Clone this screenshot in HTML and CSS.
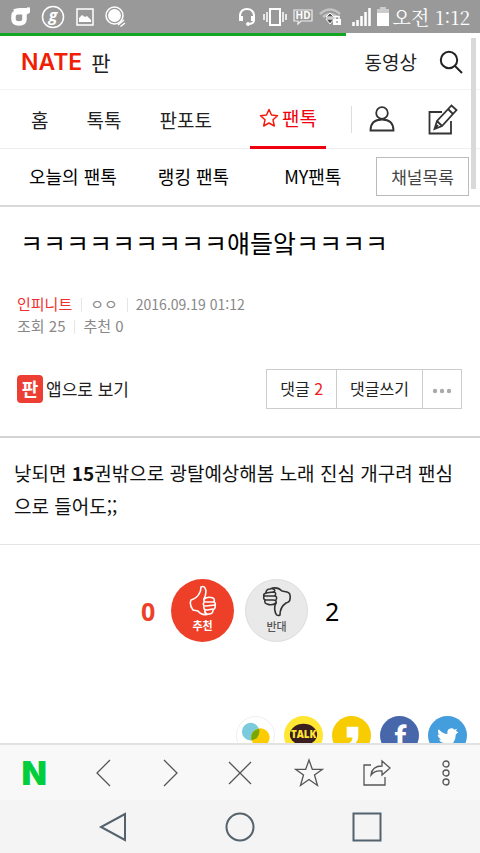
FILE: index.html
```html
<!DOCTYPE html>
<html lang="ko">
<head>
<meta charset="utf-8">
<meta name="viewport" content="width=device-width, initial-scale=1">
<title>네이트 판</title>
<link rel="stylesheet" href="styles.css">
</head>
<body>
<div class="status">
  <div class="status-icons">
    <svg width="20" height="20" viewBox="0 0 20 20"><path d="M19.500 0.500Q19 5.200 15 5.200H8Q3.500 5.200 3.500 9V12Q3.500 16.500 9 16.500Q14.500 16.500 14.500 12V4" fill="none" stroke="#fff" stroke-width="4.500"/><path d="M3 2.500Q6 1 10 1H19V6H6Z" fill="#fff"/></svg>
    <svg width="24" height="24" viewBox="0 0 24 24"><circle cx="12" cy="12" r="10.500" fill="none" stroke="#fff" stroke-width="1.500"/><text x="12" y="16" class="g-mark">g</text></svg>
    <svg width="18" height="18" viewBox="0 0 18 18"><rect x="1" y="1" width="16" height="16" fill="none" stroke="#fff" stroke-width="1.500"/><path d="M3 14V10L6 7L9 9L11 8L15 12V14Z" fill="#fff"/></svg>
    <svg width="21" height="22" viewBox="0 0 21 22"><circle cx="9.500" cy="9.500" r="8.500" fill="none" stroke="#fff" stroke-width="1.500"/><circle cx="9.500" cy="9.500" r="6.500" fill="#fff"/><path d="M13 19L19 14M15.500 20.500L20 17" stroke="#fff" stroke-width="1.500"/></svg>
  </div>
  <div class="status-info">
    <svg width="20" height="20" viewBox="0 0 20 20" fill="none" stroke="#fff"><path d="M3 13V8Q4 2 10 2Q16 2 17 8V13Q17 17 11 17" stroke-width="2"/><path d="M4 9V14M16 9V14" stroke-width="4"/><circle cx="11" cy="17" r="1.500" fill="#fff"/></svg>
    <svg width="24" height="20" viewBox="0 0 24 20" fill="none" stroke="#fff"><rect x="7" y="2" width="10" height="16" stroke-width="2"/><path d="M4 5V15M20 5V15" stroke-width="1.500"/><path d="M1 7V13M23 7V13" stroke-width="1.500"/></svg>
    <svg width="20" height="18" viewBox="0 0 20 18"><path d="M1 2H19V13H8L5 16V13H1Z" fill="none" stroke="#eee" stroke-width="1.200"/><text x="10" y="11" class="hd-mark">HD</text></svg>
    <svg width="22" height="18" viewBox="0 0 22 18"><path d="M1 6Q11 -3 21 6M4 9Q11 3 18 9" fill="none" stroke="#c4c4c4" stroke-width="2.500"/><path d="M7 9L11 5L15 9ZM7 11H15L11 16Z" fill="#555" stroke="#fff"/><rect x="14" y="11" width="8" height="6" fill="#fff"/><path d="M16 11V8.500H20V11" fill="none" stroke="#fff" stroke-width="1.500"/><path d="M18 13V15" stroke="#777"/></svg>
    <svg class="signal" width="20" height="20" viewBox="0 0 20 20"><path d="M2.500 19V15M6.500 19V13M10.500 19V9M14.500 19V5M18.500 19V1" stroke="#fff" stroke-width="2.500"/></svg>
    <svg width="12" height="20" viewBox="0 0 12 20"><path d="M3 0H9V2H12V19H0V2H3Z" fill="#ccc"/><path d="M0 6H12V19H0Z" fill="#fff"/></svg>
    <span class="clock">오전 1:12</span>
  </div>
</div>
<div class="progress"><div class="progress-bar"></div></div>

<main class="page">
  <div class="scrollbar"></div>
  <header class="top">
    <a class="logo" href="#"><b>NATE</b><span>판</span></a>
    <a class="video" href="#">동영상</a>
    <button class="icon-btn" aria-label="검색"><svg width="24" height="24" viewBox="0 0 24 24" fill="none" stroke="#222" stroke-width="2"><circle cx="10" cy="10" r="8.200"/><path d="M16 16L23 23"/></svg></button>
  </header>
  <nav class="tabs">
    <a class="tab" href="#">홈</a>
    <a class="tab" href="#">톡톡</a>
    <a class="tab" href="#">판포토</a>
    <a class="tab active" href="#"><svg width="20" height="20" viewBox="0 0 20 20"><path d="M10 1.500L12.500 7L18.500 7.700L14 11.800L15.300 18L10 15L4.700 18L6 11.800L1.500 7.700L7.500 7Z" fill="none" stroke="#f21c0d" stroke-width="1.500" stroke-linejoin="round"/></svg>팬톡</a>
    <span class="tools">
      <button class="icon-btn" aria-label="내 정보"><svg width="26" height="26" viewBox="0 0 26 26" fill="none" stroke="#333" stroke-width="1.800"><circle cx="13" cy="7" r="5.800"/><path d="M1.500 24.500Q1.500 13.500 13 13.500Q24.500 13.500 24.500 24.500Z"/></svg></button>
      <button class="icon-btn" aria-label="글쓰기"><svg width="30" height="31" viewBox="0 0 30 31" fill="none" stroke="#333" stroke-width="1.800"><path d="M14 8H1.500V29.500H23V17"/><path d="M6.500 25L9 17L23.500 1.500L28.500 6L14 22ZM20 5L25 10M9 17L14 22M6.500 25L10 21"/></svg></button>
    </span>
  </nav>
  <nav class="subtabs">
    <a href="#">오늘의 팬톡</a>
    <a href="#">랭킹 팬톡</a>
    <a href="#">MY팬톡</a>
    <button class="channels">채널목록</button>
  </nav>

  <article>
    <section class="head">
      <h1>ㅋㅋㅋㅋㅋㅋㅋㅋㅋ얘들앜ㅋㅋㅋㅋ</h1>
      <div class="meta">
        <p><a class="channel" href="#">인피니트</a><span class="writer">ㅇㅇ</span><span class="date">2016.09.19 01:12</span></p>
        <p><span>조회 25</span><span>추천 0</span></p>
      </div>
      <div class="actions">
        <a class="app" href="#"><span class="app-icon">판</span>앱으로 보기</a>
        <div class="group">
          <button>댓글 <em>2</em></button><button>댓글쓰기</button><button class="more" aria-label="더보기"><svg width="20" height="6" viewBox="0 0 20 6" fill="#aaa"><circle cx="3" cy="3" r="2.200"/><circle cx="10" cy="3" r="2.200"/><circle cx="17" cy="3" r="2.200"/></svg></button>
        </div>
      </div>
    </section>
    <p class="content">낮되면 <b>15</b>권밖으로 광탈예상해봄 노래 진심 개구려 팬심으로 들어도;;</p>
    <section class="votes">
      <span class="count up">0</span>
      <button class="vote like"><svg width="28" height="32" viewBox="0 0 28 32" fill="none" stroke="#fff" stroke-width="1.600" stroke-linejoin="round" stroke-linecap="round"><path d="M15 14Q19 11 24 13Q26 14 25 17Q27 18 26 21Q27 23 24 25Q24 29 20 29Q13 31 9 26L4 25Q0 20 2 15Q8 13 10 9Q12 6 12 2Q16 0 17 6Q17 10 15 14"/><path d="M15 14Q14 17 18 17L25 17M15 17Q13 21 17 21L26 20M15 21Q14 25 18 25L24 24M16 25Q15 28 18 29"/></svg>추천</button>
      <button class="vote dislike"><svg width="30" height="32" viewBox="0 0 30 32" fill="none" stroke="#333" stroke-width="1.600" stroke-linejoin="round" stroke-linecap="round"><path d="M14 17Q10 20 5 18Q2 17 3 14Q1 13 2 10Q1 8 4 7Q4 3 8 3Q15 0 20 5L25 6Q29 7 28 13Q28 16 24 17Q18 21 18 29Q14 31 13 25Q12 21 14 17"/><path d="M14 17Q15 14 11 14L3 14M14 14Q16 10 12 10L2 10M13 10Q15 6 11 6L4 7M12 6Q14 4 11 3"/></svg>반대</button>
      <span class="count down">2</span>
    </section>
    <section class="share">
      <a href="#" aria-label="공감"><svg viewBox="0 0 40 40"><circle cx="20" cy="20" r="19.500" fill="#fff" stroke="#eee"/><circle cx="15" cy="16" r="9" fill="#7bcbdc"/><circle cx="25" cy="22" r="9.500" fill="#fccb00"/><path d="M23.800 13Q25 19 21 23L16 25Q14 15 23.800 13Z" fill="#7aa600"/></svg></a>
      <a href="#" aria-label="카카오톡"><svg viewBox="0 0 40 40"><circle cx="20" cy="20" r="20" fill="#ffe633"/><ellipse cx="20" cy="19" rx="14" ry="11" fill="#381e1f"/><path d="M13 27L12 34L20 29Z" fill="#381e1f"/><text x="20" y="23" class="talk-mark">TALK</text></svg></a>
      <a href="#" aria-label="카카오스토리"><svg viewBox="0 0 40 40"><circle cx="20" cy="20" r="20" fill="#f7cc00"/><path d="M15 11H27V21Q27 28 19 31L17 28Q21 26 21 22H15Z" fill="#fff"/></svg></a>
      <a href="#" aria-label="페이스북"><svg viewBox="0 0 40 40"><circle cx="20" cy="20" r="20" fill="#4867aa"/><text x="21" y="35" class="fb-mark">f</text></svg></a>
      <a href="#" aria-label="트위터"><svg viewBox="0 0 40 40"><circle cx="20" cy="20" r="20" fill="#449ddc"/><path d="M31 15.500Q30 17 28.500 18Q28.500 26 22 30Q15 33 9 28.500Q13 29 16 26.500Q12 26 11.500 23H13.500Q10 21 10 18L12 18.500Q9 16 11 12.500Q15 17 20 17.500Q19 12 24 11.500Q26 11.500 27 13L30 12L28.500 14.500Z" transform="translate(0 1)" fill="#fff"/></svg></a>
    </section>
  </article>
</main>

<nav class="browser">
  <a href="#" class="naver">N</a>
  <button aria-label="뒤로"><svg width="16" height="28" viewBox="0 0 16 28"><path d="M15 1L2 14L15 27"/></svg></button>
  <button aria-label="앞으로"><svg width="16" height="28" viewBox="0 0 16 28"><path d="M1 1L14 14L1 27"/></svg></button>
  <button aria-label="닫기"><svg width="24" height="24" viewBox="0 0 24 24"><path d="M1 1L23 23M23 1L1 23"/></svg></button>
  <button aria-label="즐겨찾기"><svg width="30" height="30" viewBox="0 0 30 30"><path d="M15 2L18.300 11.300H28.500L20.500 17L23.500 27.500L15 21.500L6.500 27.500L9.500 17L1.500 11.300H11.700Z"/></svg></button>
  <button aria-label="공유"><svg width="30" height="28" viewBox="0 0 30 28"><path d="M9 6H2V26H23V18M9 16Q10 7 20 7V2L28 9L20 16V12Q13 11 9 16Z"/></svg></button>
  <button aria-label="메뉴"><svg width="10" height="28" viewBox="0 0 10 28"><circle cx="5" cy="5" r="3"/><circle cx="5" cy="14" r="3"/><circle cx="5" cy="23" r="3"/></svg></button>
</nav>
<nav class="system">
  <button aria-label="이전"><svg width="30" height="30" viewBox="0 0 30 30"><path d="M27 2V28L3 15Z"/></svg></button>
  <button aria-label="홈"><svg width="30" height="30" viewBox="0 0 30 30"><circle cx="15" cy="15" r="13.500"/></svg></button>
  <button aria-label="최근 앱"><svg width="30" height="30" viewBox="0 0 30 30"><rect x="1.500" y="1.500" width="27" height="27"/></svg></button>
</nav>
</body>
</html>
```
FILE: styles.css
```css
* { box-sizing: border-box; }
body {
  margin: 0;
  height: 100vh;
  display: flex;
  flex-direction: column;
  overflow: hidden;
  background: #fff;
  color: #000;
  font-family: "Noto Sans CJK KR", sans-serif;
}
a { color: inherit; text-decoration: none; }
button {
  margin: 0;
  padding: 0;
  border: 0;
  background: none;
  color: inherit;
  font: inherit;
}
h1, p { margin: 0; font-weight: 400; }
svg { display: block; flex: none; }

.status {
  flex: none;
  height: 33px;
  padding: 0 10px;
  display: flex;
  align-items: center;
  justify-content: space-between;
  background: #999;
  color: #fff;
}
.status-icons { display: flex; align-items: center; gap: 11px; }
.status-info { display: flex; align-items: center; gap: 6px; }
.signal { margin-left: 4px; }
.clock {
  margin-left: -2px;
  font-family: "Noto Serif CJK KR", "Liberation Serif", "Noto Sans CJK KR", serif;
  font-size: 19px;
}
.g-mark { font: italic bold 16px "Open Sans", sans-serif; text-anchor: middle; fill: #fff; }
.hd-mark { font: bold 10px "Noto Sans", sans-serif; text-anchor: middle; fill: #fff; }
.progress { flex: none; height: 3px; }
.progress-bar { width: 72%; height: 100%; background: #12a622; }

.page { position: relative; flex: 1; min-height: 0; overflow: hidden; }
.scrollbar {
  position: absolute;
  top: 2px;
  right: 4px;
  width: 5px;
  height: 151px;
  background: #d9d9d9;
}
.icon-btn { display: flex; }

.top {
  height: 54px;
  padding: 0 17px 2px 21px;
  display: flex;
  align-items: center;
  border-bottom: 1px solid #f3f3f3;
}
.logo { display: flex; align-items: center; gap: 9px; margin-right: auto; font-size: 21px; line-height: 32px; color: #222; }
.logo b { font-family: Inter, sans-serif; font-size: 23px; font-weight: 600; color: #f01e05; }
.video { margin-right: 22px; font-size: 19px; color: #222; }

.tabs {
  height: 59px;
  padding: 0 22px 0 31px;
  display: flex;
  align-items: center;
  border-bottom: 1px solid #eee;
  font-size: 19px;
  color: #222;
}
.tab { margin-right: 38px; }
.tab.active {
  display: flex;
  align-items: center;
  gap: 3px;
  height: 59px;
  margin-right: 0;
  padding: 0 9px;
  border-bottom: 3px solid #f0000c;
  color: #f0000c;
}
.tools {
  display: flex;
  align-items: center;
  gap: 33px;
  height: 27px;
  margin-left: auto;
  padding-left: 17px;
  border-left: 1px solid #ddd;
}

.subtabs {
  height: 58px;
  padding: 0 11px 2px 29px;
  display: flex;
  align-items: center;
  border-bottom: 2px solid #d8d8d8;
  font-size: 18px;
}
.subtabs a { margin-right: 41px; }
.subtabs a:nth-child(2) { margin-right: 55px; }
.subtabs a:nth-child(3) { margin-right: auto; }
.channels {
  width: 93px;
  height: 39px;
  border: 1px solid #bbb;
  font-size: 17px;
  color: #444;
}

.head { padding: 17px 18px 27px 17px; border-bottom: 2px solid #d4d4d4; }
.head h1 { padding-left: 3px; font-size: 25px; line-height: 37px; }
.meta { margin-top: 32px; font-size: 15px; line-height: 22px; color: #888; }
.meta p { display: flex; align-items: center; }
.meta p > * + * { position: relative; margin-left: 18px; }
.meta p > * + *::before {
  content: "";
  position: absolute;
  left: -9px;
  top: 5px;
  width: 1px;
  height: 14px;
  background: #e6e6e6;
}
.meta .channel { color: #f02e2e; }
.meta .date { font-size: 14px; }

.actions { display: flex; align-items: center; justify-content: space-between; margin-top: 32px; }
.app { display: flex; align-items: center; gap: 3px; font-size: 17px; line-height: 24px; color: #222; }
.app-icon {
  width: 26px;
  height: 28px;
  border-radius: 4px;
  background: #ed3e34;
  color: #fff;
  font-size: 18px;
  font-weight: 700;
  line-height: 27px;
  text-align: center;
}
.group { display: flex; height: 40px; border: 1px solid #ccc; font-size: 16px; color: #222; }
.group button { padding: 0 13px 2px; }
.group button + button { border-left: 1px solid #ccc; }
.group .more { padding: 4px 9px 0; }
.group em { font-style: normal; color: #f02020; }

.content {
  padding: 18px 14px 22px;
  border-bottom: 1px solid #e4e4e4;
  font-size: 19px;
  line-height: 33px;
  word-break: break-all;
  color: #111;
}

.votes { display: flex; align-items: center; justify-content: center; padding-top: 34px; }
.count { width: 14px; font-family: "Noto Sans", sans-serif; font-size: 25px; line-height: 34px; }
.up { margin-right: 16px; font-weight: 700; color: #ee4028; }
.down { margin-left: 17px; }
.vote {
  width: 63px;
  height: 63px;
  border-radius: 50%;
  display: flex;
  flex-direction: column;
  align-items: center;
  padding-top: 6px;
  font-size: 11px;
  font-weight: 700;
  line-height: 16px;
}
.like { background: #ee4028; color: #fff; }
.dislike { margin-left: 11px; border: 1px solid #ddd; background: #e9e9e9; color: #555; font-weight: 500; }

.share { display: flex; justify-content: flex-end; gap: 9px; padding: 74px 13px 0; }
.share svg { width: 39px; height: 39px; }
.talk-mark { font: 800 10px "Open Sans", sans-serif; text-anchor: middle; fill: #ffe633; }
.fb-mark { font: bold 34px Roboto, sans-serif; text-anchor: middle; fill: #fff; }

.browser {
  flex: none;
  height: 57px;
  display: grid;
  grid-template-columns: repeat(7, 1fr);
  align-items: center;
  justify-items: center;
  border-top: 2px solid #e2e2e2;
  background: #f8f8f8;
}
.browser svg { fill: none; stroke: #555; stroke-width: 1.3; }
.naver {
  font-family: Inter, sans-serif;
  font-size: 33px;
  font-weight: 900;
  line-height: 40px;
  color: #00ce3c;
}
.system {
  flex: none;
  height: 53px;
  display: flex;
  align-items: center;
  justify-content: center;
  gap: 97px;
  background: #f4f4f4;
}
.system svg { fill: none; stroke: #53626c; stroke-width: 2; }
```
